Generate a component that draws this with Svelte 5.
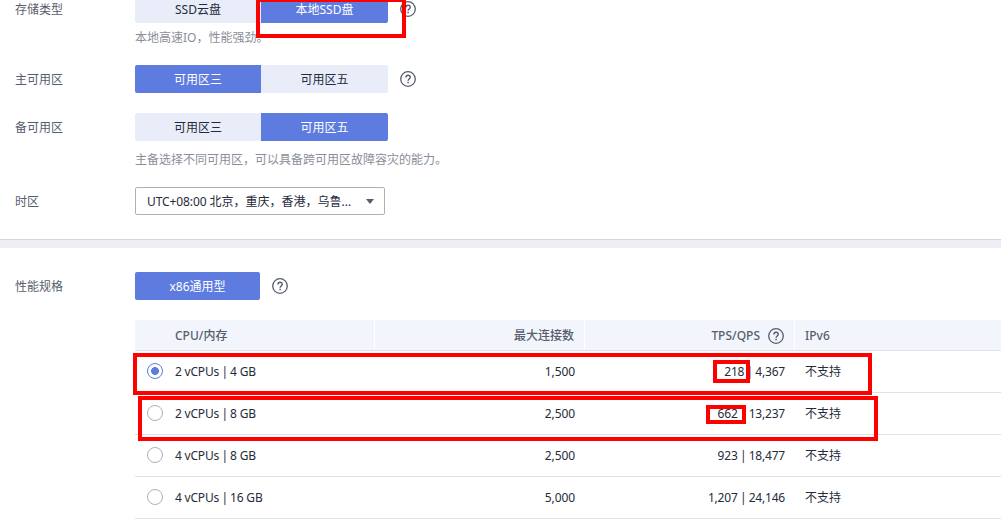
<script>
    let specs = $state([
        { cpu: ["2 vCPUs", "4 GB"], connections: "1,500", tps: ["218", "4,367"] },
        { cpu: ["2 vCPUs", "8 GB"], connections: "2,500", tps: ["662", "13,237"] },
        { cpu: ["4 vCPUs", "8 GB"], connections: "2,500", tps: ["923", "18,477"] },
        { cpu: ["4 vCPUs", "16 GB"], connections: "5,000", tps: ["1,207", "24,146"] },
    ]);

    let storage = $state(1);
    let primaryZone = $state(0);
    let standbyZone = $state(1);
    let selected = $state(0);
</script>

{#snippet help()}
    <svg class="help" width="16" height="16" viewBox="0 0 16 16" fill="none" stroke="#575d6c">
        <circle cx="8" cy="8" r="7.3" stroke-width="1.3" />
        <path d="M5.9 6.4C5.9 5 6.8 4.2 8.05 4.2s2.15.8 2.15 2c0 1.7-2.1 1.8-2.1 3.5" stroke-width="1.4" />
        <path d="M8.1 10.7v1.5" stroke-width="1.5" />
    </svg>
{/snippet}

{#snippet group(options, active, pick)}
    <div class="group">
        {#each options as option, i}
            <button class:active={i === active} onclick={() => pick(i)}>{option}</button>
        {/each}
    </div>
{/snippet}

{#snippet pair([a, b])}
    <span class="pair">{a} <span class="bar">|</span> {b}</span>
{/snippet}

<div class="page">
    <section class="basic">
        <div class="row storage">
            <span class="label">存储类型</span>
            <div class="control">
                {@render group(["SSD云盘", "本地SSD盘"], storage, (i) => (storage = i))}
                {@render help()}
            </div>
        </div>
        <p class="hint">本地高速IO，性能强劲。</p>
        <div class="row primary">
            <span class="label">主可用区</span>
            <div class="control">
                {@render group(["可用区三", "可用区五"], primaryZone, (i) => (primaryZone = i))}
                {@render help()}
            </div>
        </div>
        <div class="row standby">
            <span class="label">备可用区</span>
            <div class="control">
                {@render group(["可用区三", "可用区五"], standbyZone, (i) => (standbyZone = i))}
            </div>
        </div>
        <p class="hint">主备选择不同可用区，可以具备跨可用区故障容灾的能力。</p>
        <div class="row timezone">
            <span class="label">时区</span>
            <div class="select">
                <span class="value"><span class="offset">UTC+08:00</span> 北京，重庆，香港，乌鲁...</span>
                <svg width="8" height="5" viewBox="0 0 8 5"><path d="M0 0h8L4 5z" fill="#575d6c" /></svg>
            </div>
        </div>
    </section>

    <div class="divider"></div>

    <section class="spec">
        <div class="row">
            <span class="label">性能规格</span>
            <div class="control">
                <div class="group single"><button class="active">x86通用型</button></div>
                {@render help()}
            </div>
        </div>
        <div class="table">
            <div class="tr head">
                <div class="cell first">CPU/内存</div>
                <div class="cell right">最大连接数</div>
                <div class="cell right tps"><span>TPS/QPS</span>{@render help()}</div>
                <div class="cell">IPv6</div>
            </div>
            {#each specs as spec, i}
                <div class="tr">
                    <div class="cell">
                        <button
                            class="radio"
                            class:checked={i === selected}
                            aria-label={spec.cpu.join(" | ")}
                            onclick={() => (selected = i)}
                        ></button>
                        {@render pair(spec.cpu)}
                    </div>
                    <div class="cell right connections">{spec.connections}</div>
                    <div class="cell right">{@render pair(spec.tps)}</div>
                    <div class="cell">不支持</div>
                </div>
            {/each}
        </div>
    </section>

    <div class="mark mark-storage"></div>
    <div class="mark mark-first"></div>
    <div class="mark mark-second"></div>
    <div class="mark mark-tps-first"></div>
    <div class="mark mark-tps-second"></div>
</div>

<style>
    .page {
        position: relative;
        height: 522px;
        overflow: hidden;
        background: #fff;
        color: #252b3a;
        font-family: "Noto Sans", "Noto Sans CJK SC", sans-serif;
        font-size: 12px;
        line-height: 18px;
    }

    button {
        padding: 0;
        border: 0;
        font: inherit;
        color: inherit;
        cursor: pointer;
    }

    .basic {
        display: flow-root;
        height: 239px;
    }

    .row {
        display: flex;
        align-items: center;
        height: 28px;
    }

    .storage {
        margin-top: -5px;
    }

    .primary {
        margin-top: 18px;
    }

    .standby {
        margin-top: 20px;
    }

    .timezone {
        margin-top: 18px;
    }

    .label {
        width: 120px;
        margin-left: 15px;
        padding-top: 2px;
        color: #575d6c;
    }

    .control {
        display: flex;
        align-items: center;
        gap: 12px;
    }

    .group {
        display: flex;
        width: 253px;
        height: 28px;
        border-radius: 2px;
        overflow: hidden;
    }

    .group button {
        flex: 0 0 126px;
        padding-top: 2px;
        background: #e9edfa;
    }

    .group button:last-child {
        flex: 1;
    }

    .group button.active {
        background: #5e7ce0;
        color: #fff;
    }

    .group.single {
        width: 125px;
    }

    .help {
        flex: none;
    }

    .hint {
        height: 18px;
        margin: 6px 0 0 135px;
        color: #8a8e99;
    }

    .standby + .hint {
        margin-top: 10px;
    }

    .select {
        display: flex;
        align-items: center;
        justify-content: space-between;
        box-sizing: border-box;
        width: 250px;
        height: 28px;
        padding: 0 10px 0 11px;
        border: 1px solid #adb0b8;
        border-radius: 2px;
    }

    .value {
        padding-top: 2px;
    }

    .offset {
        letter-spacing: -0.1px;
    }

    .divider {
        box-sizing: border-box;
        height: 9px;
        border-top: 1px solid #d5d7df;
        background: #eeeff5;
    }

    .spec {
        padding-top: 24px;
    }

    .table {
        margin: 20px 0 0 135px;
    }

    .tr {
        display: grid;
        grid-template-columns: 240px 210px 210px 1fr;
        box-sizing: border-box;
        height: 42px;
        border-bottom: 1px solid #dfe1e6;
    }

    .cell {
        display: flex;
        align-items: center;
        padding: 0 10px;
        white-space: nowrap;
    }

    .right {
        justify-content: flex-end;
    }

    .connections {
        letter-spacing: -0.1px;
    }

    .pair {
        letter-spacing: -0.2px;
    }

    .bar {
        margin: 0 -0.6px;
    }

    .head {
        height: 31px;
        background: #f2f5fc;
        color: #575d6c;
        font-weight: 500;
    }

    .head .cell {
        padding-top: 2px;
    }

    .head .cell:not(:last-child) {
        border-right: 1px solid #fff;
    }

    .head .first {
        padding-left: 40px;
    }

    .head .tps {
        gap: 8px;
        padding-top: 1px;
    }

    .radio {
        box-sizing: border-box;
        width: 16px;
        height: 16px;
        margin: 0 12px 1px 2px;
        border: 1px solid #adb0b8;
        border-radius: 50%;
        background: #fff;
    }

    .radio.checked {
        border-color: #5e7ce0;
        background: radial-gradient(circle, #5e7ce0 3.6px, #fff 4.3px);
    }

    /* hand-placed highlight frames over the form */
    .mark {
        position: absolute;
        box-sizing: border-box;
        border: 4px solid #f00;
        pointer-events: none;
    }

    .mark-storage {
        left: 256px;
        top: -2px;
        width: 150px;
        height: 40px;
    }

    .mark-first {
        left: 133px;
        top: 353px;
        width: 739px;
        height: 42px;
    }

    .mark-second {
        left: 138px;
        top: 396px;
        width: 740px;
        height: 45px;
    }

    .mark-tps-first {
        left: 713px;
        top: 360px;
        width: 37px;
        height: 23px;
    }

    .mark-tps-second {
        left: 706px;
        top: 405px;
        width: 40px;
        height: 19px;
    }
</style>
